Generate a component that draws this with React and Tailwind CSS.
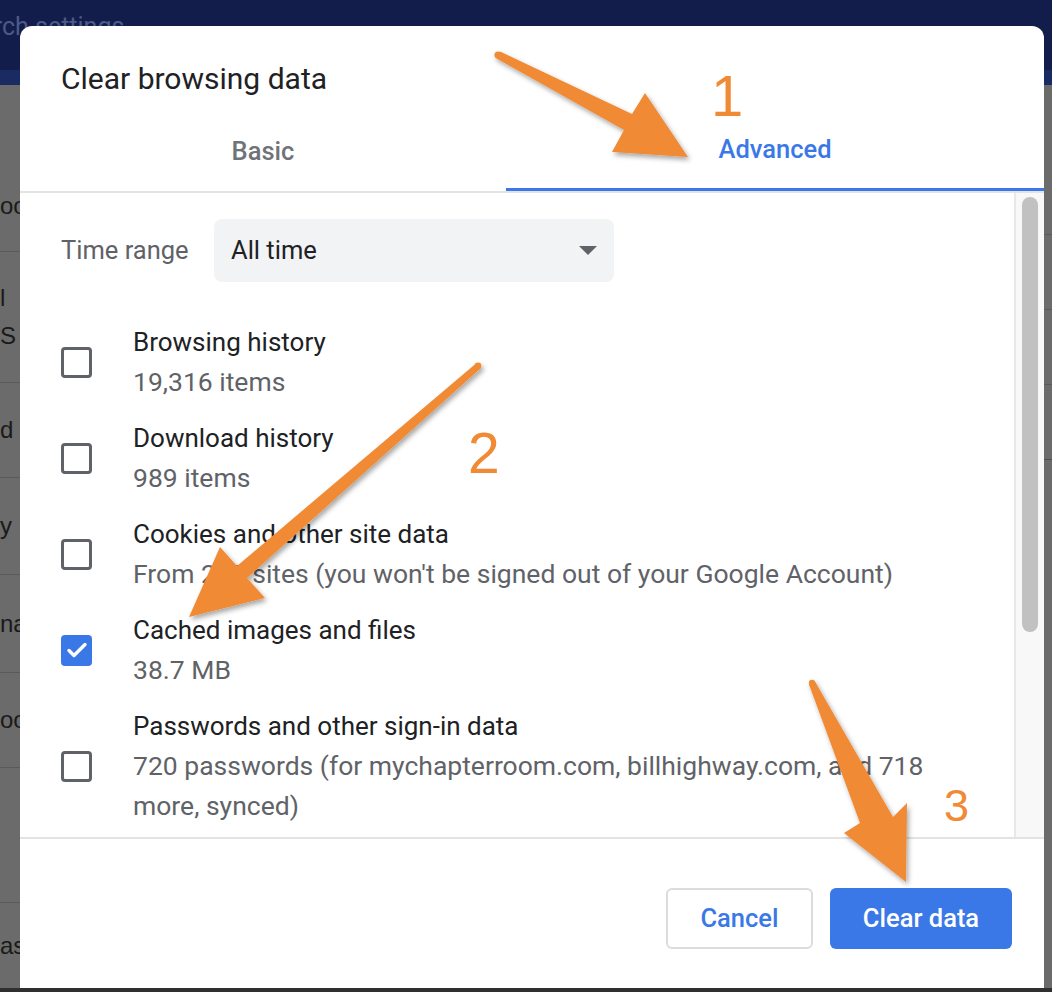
import React from "react";

const items = [
  { title: "Browsing history", sub: "19,316 items", checked: false },
  { title: "Download history", sub: "989 items", checked: false },
  {
    title: "Cookies and other site data",
    sub: "From 279 sites (you won't be signed out of your Google Account)",
    checked: false,
  },
  { title: "Cached images and files", sub: "38.7 MB", checked: true },
  {
    title: "Passwords and other sign-in data",
    sub: "720 passwords (for mychapterroom.com, billhighway.com, and 718 more, synced)",
    checked: false,
  },
];

// bits of the dimmed settings page that show left of the dialog
const leftBits = [
  { h: 75, lines: [], border: false },
  { h: 92, lines: ["oo"], border: true },
  { h: 131, lines: ["l", "S"], border: true },
  { h: 95, lines: ["d ("], border: true },
  { h: 97, lines: ["y"], border: true },
  { h: 98, lines: ["na"], border: true },
  { h: 95, lines: ["oo"], border: true },
  { h: 135, lines: [], border: true },
  { h: 85, lines: ["as"], border: false },
];

function Checkbox({ checked }) {
  if (checked) {
    return (
      <div className="w-[31px] h-[31px] rounded-[4px] bg-[#3b78e7] flex items-center justify-center shrink-0">
        <svg width="24" height="24" viewBox="0 0 24 24">
          <path d="M4 12.5l5 5L20 6.5" fill="none" stroke="#fff" strokeWidth="3.4" strokeLinecap="round" strokeLinejoin="round" />
        </svg>
      </div>
    );
  }
  return <div className="w-[31px] h-[31px] rounded-[4px] border-[3.5px] border-[#5f6368] shrink-0" />;
}

function Arrows() {
  return (
    <svg className="absolute inset-0 pointer-events-none" width="1052" height="992" viewBox="0 0 1052 992">
      <defs>
        <filter id="shadow" x="-20%" y="-20%" width="140%" height="140%">
          <feDropShadow dx="2" dy="3" stdDeviation="2.5" floodColor="#000" floodOpacity="0.35" />
        </filter>
      </defs>
      <g fill="#f08a35" filter="url(#shadow)">
        <polygon points="500,51.5 632,114 645,93 688,157 612,152 624,130 496.5,58.5" />
        <circle cx="498" cy="55" r="3.6" />
        <polygon points="476,363.5 237,566 220,547 189,617 265,598 247,578 480.5,368.5" />
        <circle cx="478" cy="366" r="3.4" />
        <polygon points="809,684.5 860,823 844,833 906,882 907,803 893,817 815,681.5" />
        <circle cx="812" cy="683" r="3.2" />
      </g>
    </svg>
  );
}

export default function App() {
  return (
    <div className="relative w-[1052px] h-[992px] overflow-hidden bg-[#6b6b6b] font-['Roboto',sans-serif]">
      {/* dimmed settings page behind the dialog */}
      <div className="flex flex-col h-full">
        <div className="h-[70px] bg-[#121d4c] shrink-0 overflow-hidden">
          <div className="-ml-[48px] pt-[12px] text-[25px] leading-[30px] text-[#4d5a86] whitespace-nowrap">
            Search settings
          </div>
        </div>
        <div className="h-[15px] bg-[#1a2a62] shrink-0" />
        <div className="flex flex-1">
          <div className="w-[20px] flex flex-col text-[24px] leading-[38px] text-[#1a1a1a] font-['Liberation_Sans',sans-serif]">
            {leftBits.map((b, i) => (
              <div
                key={i}
                style={{ height: b.h }}
                className={
                  "flex flex-col justify-center overflow-hidden whitespace-nowrap " +
                  (b.border ? "border-b border-[#5a5a5a]" : "")
                }
              >
                {b.lines.map((l) => (
                  <div key={l}>{l}</div>
                ))}
              </div>
            ))}
          </div>
          <div className="flex-1" />
          <div className="w-[8px] flex flex-col">
            <div className="h-[150px] border-b border-[#5a5a5a]" />
            <div className="h-[75px] border-b border-[#5a5a5a]" />
            <div className="h-[75px] border-b border-[#5a5a5a]" />
            <div className="h-[75px] border-b border-[#4f4f4f]" />
          </div>
        </div>
        <div className="h-[4px] bg-[#2f2f2f] shrink-0" />
      </div>

      {/* dialog */}
      <div className="absolute left-[20px] top-[26px] w-[1024px] h-[962px] bg-white rounded-t-[12px] flex flex-col">
        <div className="pl-[41px] pt-[36px] text-[30px] leading-[34px] text-[#202124]">Clear browsing data</div>
        <div className="mt-[15px] flex border-b-2 border-[#e3e3e3]">
          <div className="w-[486px] h-[80px] flex items-center justify-center text-[25.5px] font-medium text-[#6f7378]">
            Basic
          </div>
          <div className="flex-1 h-[80px] flex items-center justify-center text-[25.5px] font-medium text-[#3b78e7] border-b-[3px] border-[#3b78e7] -mb-[2px]">
            Advanced
          </div>
        </div>

        <div className="h-[646px] flex border-b-2 border-[#e3e3e3] overflow-hidden">
          <div className="flex-1 flex flex-col pt-[26px] pl-[41px]">
            <div className="flex items-center">
              <div className="w-[153px] text-[25.5px] text-[#5f6368]">Time range</div>
              <div className="w-[400px] h-[63px] rounded-[8px] bg-[#f1f3f4] flex items-center justify-between pl-[17px] pr-[17px]">
                <span className="text-[25.5px] text-[#202124]">All time</span>
                <svg width="18" height="10" viewBox="0 0 18 10">
                  <polygon points="0,0 18,0 9,9" fill="#5f6368" />
                </svg>
              </div>
            </div>
            <div className="flex flex-col gap-[16px] mt-[40px]">
              {items.map((it) => (
                <div key={it.title} className="flex items-center gap-[41px]">
                  <Checkbox checked={it.checked} />
                  <div className="w-[808px] leading-[40px]">
                    <div className="text-[26px] text-[#202124]">{it.title}</div>
                    <div className="text-[26.5px] text-[#5f6368]">{it.sub}</div>
                  </div>
                </div>
              ))}
            </div>
          </div>
          <div className="w-[30px] border-l-2 border-[#e8e8e8] bg-[#f8f8f8] pt-[4px] flex justify-center">
            <div className="w-[16px] h-[435px] rounded-full bg-[#c1c1c1]" />
          </div>
        </div>

        <div className="flex justify-end gap-[17px] pt-[49px] pr-[32px]">
          <button className="w-[147px] h-[61px] rounded-[6px] border-2 border-[#dadce0] bg-white text-[25.5px] font-medium text-[#3b78e7]">
            Cancel
          </button>
          <button className="w-[182px] h-[61px] rounded-[6px] bg-[#3b78e7] text-[25.5px] font-medium text-white">
            Clear data
          </button>
        </div>
      </div>

      <Arrows />

      <div className="absolute left-[711px] top-[67px] text-[58px] leading-none text-[#f08a35] font-['Liberation_Sans',sans-serif]">
        1
      </div>
      <div className="absolute left-[468px] top-[425px] text-[57px] leading-none text-[#f08a35] font-['Liberation_Sans',sans-serif]">
        2
      </div>
      <div className="absolute left-[944px] top-[783px] text-[45px] leading-none text-[#f08a35] font-['Liberation_Sans',sans-serif]">
        3
      </div>
    </div>
  );
}
